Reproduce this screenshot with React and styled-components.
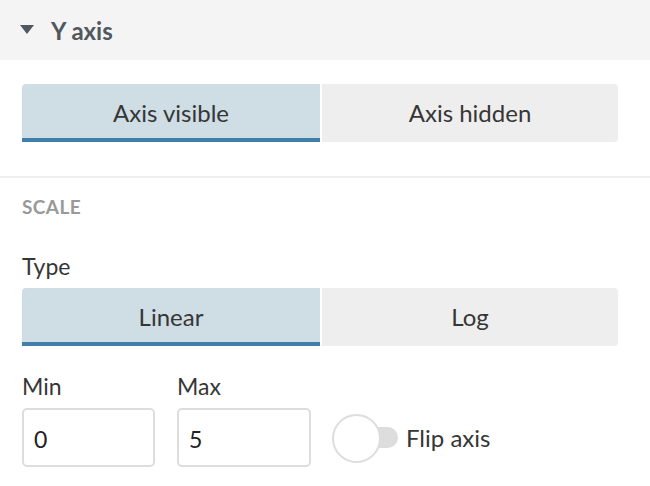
import React from 'react';
import styled, { createGlobalStyle } from 'styled-components';

const GlobalStyle = createGlobalStyle`
  body {
    margin: 0;
    background: #fff;
    font-family: Lato, "Noto Sans", sans-serif;
    color: #333;
  }
`;

const Panel = styled.div`
  width: 650px;
  height: 486px;
  overflow: hidden;
`;

const Header = styled.div`
  height: 60px;
  background: #f4f4f4;
  display: flex;
  align-items: center;
  padding-left: 20px;
  gap: 17px;
  color: #50575e;
  font-size: 24px;
  font-weight: 700;
`;

const Caret = styled.span`
  width: 0;
  height: 0;
  border-left: 7.5px solid transparent;
  border-right: 7.5px solid transparent;
  border-top: 9px solid #50575e;
  margin-top: -2px;
`;

const Section = styled.div`
  padding: ${(p) => p.$pad};
  border-bottom: ${(p) => (p.$divider ? '2px solid #eee' : 'none')};
`;

const Segmented = styled.div`
  display: grid;
  grid-template-columns: 298px 296px;
  gap: 2px;
  width: 596px;
`;

const SegButton = styled.button`
  height: 58px;
  border: none;
  border-bottom: 4px solid ${(p) => (p.$active ? '#3f7faa' : 'transparent')};
  background: ${(p) => (p.$active ? '#cfdde5' : '#eeeeee')};
  border-radius: ${(p) => (p.$active ? '4px 0 0 0' : '0 4px 4px 0')};
  font-family: inherit;
  font-size: 24px;
  color: #363636;
  padding: 3px 0 0;
  cursor: pointer;
`;

const SectionTitle = styled.div`
  font-size: 19px;
  font-weight: 700;
  color: #999;
  letter-spacing: 0.4px;
  text-transform: uppercase;
  height: 20px;
  line-height: 20px;
`;

const Label = styled.div`
  font-size: 23px;
  line-height: 26px;
  color: #363636;
  margin-bottom: ${(p) => p.$gap || '0'};
`;

const FieldRow = styled.div`
  display: flex;
  align-items: flex-end;
  gap: 22px;
`;

const Field = styled.div`
  display: flex;
  flex-direction: column;
  gap: 9px;
`;

const Input = styled.input`
  box-sizing: border-box;
  width: ${(p) => p.$w}px;
  height: 59px;
  border: 2px solid #ddd;
  border-radius: 5px;
  padding: 2px 10px 0;
  font-family: inherit;
  font-size: 23px;
  color: #222;
  outline: none;
`;

const ToggleWrap = styled.label`
  display: flex;
  align-items: center;
  gap: 8px;
  height: 59px;
  font-size: 24px;
  color: #363636;
  margin-left: -1px;
`;

const Track = styled.span`
  position: relative;
  width: 66px;
  height: 48px;
  display: flex;
  align-items: center;
`;

const Rail = styled.span`
  width: 56px;
  height: 21px;
  margin-left: 10px;
  border-radius: 11px;
  background: #ddd;
`;

const Knob = styled.span`
  position: absolute;
  left: 0;
  top: 0;
  box-sizing: border-box;
  width: 49px;
  height: 49px;
  border-radius: 50%;
  background: #fff;
  border: 2px solid #ddd;
`;

export default function App() {
  return (
    <Panel>
      <GlobalStyle />
      <Header>
        <Caret />
        <span>Y axis</span>
      </Header>
      <Section $pad="24px 32px 34px 22px" $divider>
        <Segmented>
          <SegButton $active>Axis visible</SegButton>
          <SegButton>Axis hidden</SegButton>
        </Segmented>
      </Section>
      <Section $pad="19px 32px 0 22px">
        <SectionTitle>Scale</SectionTitle>
        <Label style={{ marginTop: '36px' }} $gap="9px">Type</Label>
        <Segmented>
          <SegButton $active>Linear</SegButton>
          <SegButton>Log</SegButton>
        </Segmented>
        <FieldRow style={{ marginTop: '27px' }}>
          <Field>
            <Label>Min</Label>
            <Input $w={133} defaultValue="0" />
          </Field>
          <Field>
            <Label>Max</Label>
            <Input $w={134} defaultValue="5" />
          </Field>
          <ToggleWrap>
            <Track>
              <Rail />
              <Knob />
            </Track>
            Flip axis
          </ToggleWrap>
        </FieldRow>
      </Section>
    </Panel>
  );
}
